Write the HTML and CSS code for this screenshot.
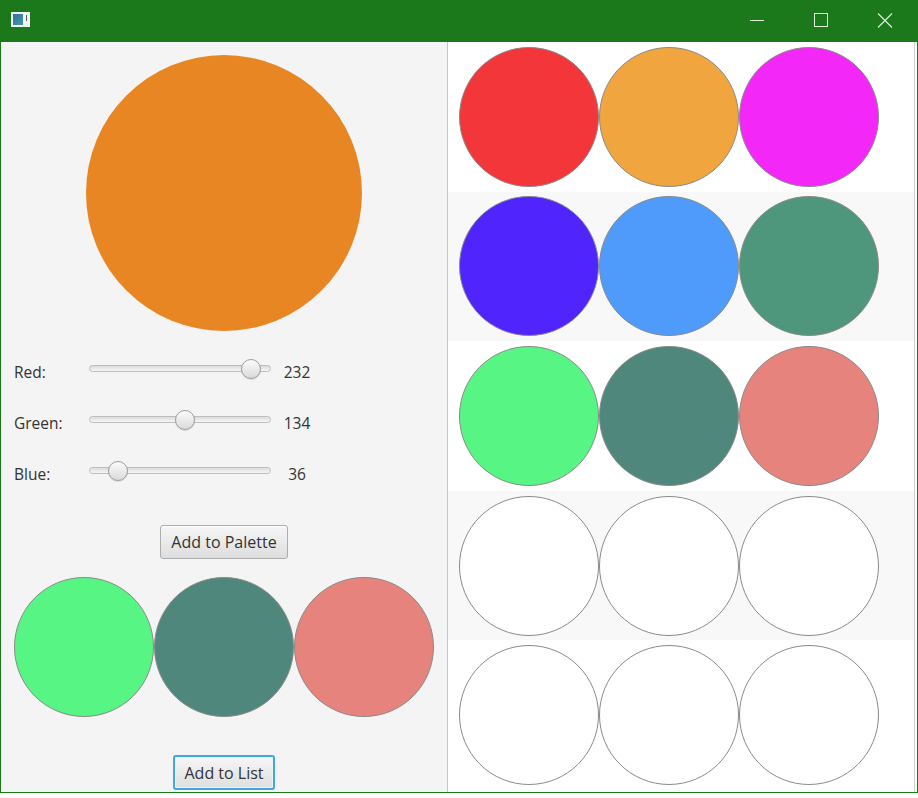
FILE: index.html
```html
<!DOCTYPE html>
<html>
<head>
<meta charset="utf-8">
<link rel="stylesheet" href="styles.css">
</head>
<body>
<div class="window">
  <div class="titlebar">
    <div class="app-icon"><span class="app-icon-img"></span><span class="app-icon-bar"></span></div>
    <div class="controls">
      <svg class="ctl" width="46" height="30" viewBox="0 0 46 30"><line x1="16" y1="20.5" x2="30" y2="20.5" stroke="#dfeedd" stroke-width="1"/></svg>
      <svg class="ctl" width="46" height="30" viewBox="0 0 46 30"><rect x="16.5" y="13.5" width="13" height="13" fill="none" stroke="#dfeedd" stroke-width="1"/></svg>
      <svg class="ctl" width="46" height="30" viewBox="0 0 46 30"><path d="M16 13.5 L30 27.5 M30 13.5 L16 27.5" stroke="#dfeedd" stroke-width="1.1" fill="none"/></svg>
    </div>
  </div>
  <div class="content">
    <div class="left">
      <div class="preview"></div>
      <div class="sliders">
        <div class="srow">
          <span class="slabel">Red:</span>
          <div class="track"><span class="thumb" style="left:161px"></span></div>
          <span class="sval">232</span>
        </div>
        <div class="srow">
          <span class="slabel">Green:</span>
          <div class="track"><span class="thumb" style="left:95px"></span></div>
          <span class="sval">134</span>
        </div>
        <div class="srow">
          <span class="slabel">Blue:</span>
          <div class="track"><span class="thumb" style="left:28px"></span></div>
          <span class="sval">36</span>
        </div>
      </div>
      <div class="btnrow palette-btn"><button class="btn">Add to Palette</button></div>
      <div class="swatches">
        <div class="dot c-green"></div>
        <div class="dot c-teal"></div>
        <div class="dot c-salmon"></div>
      </div>
      <div class="btnrow list-btn"><button class="btn focused">Add to List</button></div>
    </div>
    <div class="right">
      <div class="list">
        <div class="lrow">
          <div class="dot c-red"></div>
          <div class="dot c-orange"></div>
          <div class="dot c-magenta"></div>
        </div>
        <div class="lrow alt">
          <div class="dot c-violet"></div>
          <div class="dot c-blue"></div>
          <div class="dot c-sea"></div>
        </div>
        <div class="lrow">
          <div class="dot c-green"></div>
          <div class="dot c-teal"></div>
          <div class="dot c-salmon"></div>
        </div>
        <div class="lrow alt">
          <div class="dot"></div>
          <div class="dot"></div>
          <div class="dot"></div>
        </div>
        <div class="lrow">
          <div class="dot"></div>
          <div class="dot"></div>
          <div class="dot"></div>
        </div>
      </div>
    </div>
  </div>
</div>
</body>
</html>
```

FILE: styles.css
```css
html, body {
  margin: 0;
  padding: 0;
  background: #ffffff;
}
body {
  width: 918px;
  height: 798px;
  font-family: "Open Sans", "Noto Sans", sans-serif;
  font-size: 15.5px;
  color: #333333;
}
.window {
  width: 918px;
  height: 793px;
  box-sizing: border-box;
  border: 1px solid #1b781b;
  border-top: none;
  display: flex;
  flex-direction: column;
}
.titlebar {
  height: 42px;
  margin: 0 -1px;
  background: #1b781b;
  display: flex;
  align-items: flex-start;
  justify-content: space-between;
  flex-shrink: 0;
}
.app-icon {
  margin: 12px 0 0 11px;
  width: 19px;
  height: 15px;
  box-sizing: border-box;
  border: 2px solid #f2f6f2;
  background: #f2f6f2;
  display: flex;
}
.app-icon-img {
  width: 10px;
  height: 11px;
  background: linear-gradient(135deg, #3a6aa8, #3f9c9c);
}
.app-icon-bar {
  width: 1px;
  height: 6px;
  margin: 1px 0 0 3px;
  background: #555;
}
.controls {
  display: flex;
  margin-right: 10px;
}
.ctl {
  display: block;
  margin-left: 18px;
}
.content {
  flex: 1;
  display: flex;
  min-height: 0;
}
.left {
  width: 446px;
  background: #f4f4f4;
  border-right: 1px solid #c4c4c4;
  display: flex;
  flex-direction: column;
  align-items: center;
}
.preview {
  width: 276px;
  height: 276px;
  margin-top: 13px;
  border-radius: 50%;
  background: rgb(232, 134, 36);
}
.sliders {
  align-self: stretch;
  margin-top: 12px;
  padding-left: 13px;
  display: flex;
  flex-direction: column;
}
.srow {
  height: 51px;
  display: flex;
  align-items: center;
}
.slabel {
  width: 75px;
  padding-top: 6px;
}
.track {
  position: relative;
  width: 182px;
  height: 7px;
  box-sizing: border-box;
  border: 1px solid #bdbdbd;
  border-radius: 4px;
  background: linear-gradient(#dcdcdc, #f6f6f6);
}
.thumb {
  position: absolute;
  top: 50%;
  width: 20px;
  height: 20px;
  margin: -10px 0 0 -10px;
  box-sizing: border-box;
  border-radius: 50%;
  border: 1px solid #9c9c9c;
  background: linear-gradient(#fbfbfb, #dadada);
  box-shadow: 0 1px 1px rgba(0, 0, 0, 0.12);
}
.sval {
  width: 52px;
  text-align: center;
  padding-top: 6px;
}
.btnrow {
  display: flex;
  justify-content: center;
}
.palette-btn {
  margin-top: 29px;
}
.list-btn {
  margin-top: 38px;
}
.btn {
  font-family: "Open Sans", "Noto Sans", sans-serif;
  font-size: 16px;
  color: #333333;
  height: 34px;
  padding: 0 10px;
  border: 1px solid #adadad;
  border-radius: 3px;
  background: linear-gradient(#f6f6f6, #dedede);
  box-shadow: inset 0 1px 0 #ffffff;
}
.btn.focused {
  height: 35px;
  border: 2px solid #3fa8dc;
  box-shadow: inset 0 0 0 1px #f0f0f0;
  padding: 0 9px;
}
.swatches {
  display: flex;
  margin-top: 18px;
}
.dot {
  width: 140px;
  height: 140px;
  box-sizing: border-box;
  border-radius: 50%;
  border: 1.5px solid #8a8a8a;
  background: #ffffff;
}
.right {
  flex: 1;
  background: #ffffff;
  display: flex;
}
.list {
  width: 466px;
  border-right: 1px solid #d0d0d0;
  display: flex;
  flex-direction: column;
}
.lrow {
  height: 149.6px;
  display: flex;
  align-items: center;
  padding-left: 11px;
  background: #ffffff;
}
.lrow.alt {
  background: #f8f8f8;
}
.c-red { background: #f2363a; }
.c-orange { background: #f0a53f; }
.c-magenta { background: #f227f8; }
.c-violet { background: #4f24fd; }
.c-blue { background: #4f9bfc; }
.c-sea { background: #4f977c; }
.c-green { background: #57f684; }
.c-teal { background: #50877d; }
.c-salmon { background: #e7837d; }
```
